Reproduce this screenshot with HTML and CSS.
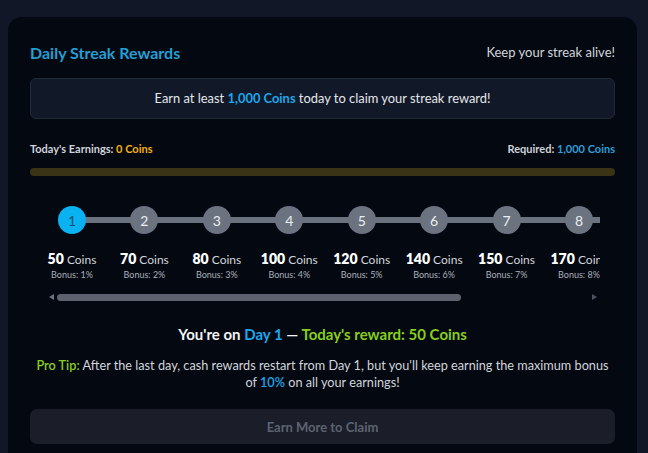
FILE: index.html
```html
<!DOCTYPE html>
<html lang="en">
<head>
<meta charset="utf-8">
<title>Daily Streak Rewards</title>
<link rel="stylesheet" href="styles.css">
</head>
<body>
<div class="card">
  <div class="header">
    <h2 class="title">Daily Streak Rewards</h2>
    <span class="subtitle">Keep your streak alive!</span>
  </div>
  <div class="notice">Earn at least <strong class="blue">1,000 Coins</strong> today to claim your streak reward!</div>
  <div class="earn-row">
    <span>Today's Earnings: <span class="amber">0 Coins</span></span>
    <span>Required: <span class="blue-dim">1,000 Coins</span></span>
  </div>
  <div class="bar"><div class="bar-fill"></div></div>

  <div class="steps-wrap">
    <div class="steps">
      <div class="step active"><div class="dot">1</div><div class="amt"><b>50</b> Coins</div><div class="bonus">Bonus: 1%</div></div>
      <div class="step"><div class="dot">2</div><div class="amt"><b>70</b> Coins</div><div class="bonus">Bonus: 2%</div></div>
      <div class="step"><div class="dot">3</div><div class="amt"><b>80</b> Coins</div><div class="bonus">Bonus: 3%</div></div>
      <div class="step"><div class="dot">4</div><div class="amt"><b>100</b> Coins</div><div class="bonus">Bonus: 4%</div></div>
      <div class="step"><div class="dot">5</div><div class="amt"><b>120</b> Coins</div><div class="bonus">Bonus: 5%</div></div>
      <div class="step"><div class="dot">6</div><div class="amt"><b>140</b> Coins</div><div class="bonus">Bonus: 6%</div></div>
      <div class="step"><div class="dot">7</div><div class="amt"><b>150</b> Coins</div><div class="bonus">Bonus: 7%</div></div>
      <div class="step"><div class="dot">8</div><div class="amt"><b>170</b> Coins</div><div class="bonus">Bonus: 8%</div></div>
      <div class="step"><div class="dot">9</div><div class="amt"><b>190</b> Coins</div><div class="bonus">Bonus: 9%</div></div>
      <div class="step last"><div class="dot">10</div><div class="amt"><b>200</b> Coins</div><div class="bonus">Bonus: 10%</div></div>
    </div>
    <div class="scrollbar">
      <span class="arrow arrow-left"></span>
      <div class="track"><div class="thumb"></div></div>
      <span class="arrow arrow-right"></span>
    </div>
  </div>

  <p class="status">You're on <span class="blue">Day 1</span> — <span class="green">Today's reward: 50 Coins</span></p>
  <p class="tip"><span class="green-tip">Pro Tip:</span> After the last day, cash rewards restart from Day 1, but you'll keep earning the maximum bonus of <span class="blue-tip">10%</span> on all your earnings!</p>

  <button class="claim" type="button" disabled>Earn More to Claim</button>
</div>
</body>
</html>
```
FILE: styles.css
```css
* { box-sizing: border-box; }
html, body { height: 100%; }
body {
  margin: 0;
  padding: 17px 11px 0 8px;
  background: #111726;
  font-family: "Lato", "Open Sans", sans-serif;
  color: #d1d5db;
  overflow: hidden;
}
.card {
  background: #040811;
  border-radius: 14px;
  padding: 22px 22px 30px;
  min-height: 480px;
}
.header {
  display: flex;
  justify-content: space-between;
  align-items: center;
  height: 26px;
}
.title {
  margin: 0;
  font-size: 16px;
  font-weight: 700;
  color: #229fd4;
}
.subtitle {
  font-size: 13px;
  color: #d1d5db;
}
.notice {
  margin-top: 13px;
  background: #111827;
  border: 1px solid #202938;
  border-radius: 6px;
  padding: 11px;
  line-height: 17px;
  font-size: 12.9px;
  text-align: center;
  color: #e5e7eb;
}
.blue { color: #1aa7ec; font-weight: 700; }
.amber { color: #f2b10e; }
.blue-dim { color: #2a9fd6; }
.earn-row {
  margin-top: 22px;
  display: flex;
  justify-content: space-between;
  font-size: 11px;
  font-weight: 700;
  line-height: 16px;
  color: #cfd3da;
}
.bar {
  margin-top: 11px;
  height: 8px;
  border-radius: 4px;
  background: #3a3315;
  overflow: hidden;
}
.bar-fill { width: 0; height: 100%; background: #eab308; }

.steps-wrap {
  margin: 30px 15px 0;
}
.steps {
  display: flex;
  gap: 18.43px;
  overflow: hidden;
}
.step {
  position: relative;
  flex: 0 0 54px;
  width: 54px;
  min-width: 0;
  display: flex;
  flex-direction: column;
  align-items: center;
  white-space: nowrap;
}
.step::after {
  content: "";
  position: absolute;
  left: 27px;
  top: 11px;
  width: 72.43px;
  height: 6px;
  background: #6b7280;
}
.step.last::after { display: none; }
.dot {
  position: relative;
  z-index: 1;
  flex: 0 0 28px;
  width: 28px;
  height: 28px;
  border-radius: 50%;
  background: #6b7280;
  color: #eceef1;
  font-size: 14px;
  display: flex;
  align-items: center;
  justify-content: center;
}
.step.active .dot {
  background: #0bb2f2;
  color: #0f4f78;
}
.amt {
  margin-top: 16px;
  line-height: 18px;
  font-size: 12px;
  color: #d1d5db;
}
.amt b {
  font-size: 14px;
  color: #ffffff;
  font-weight: 800;
}
.bonus {
  font-size: 9px;
  line-height: 11px;
  color: #aab0ba;
}
.scrollbar {
  margin-top: 13px;
  height: 8px;
  display: flex;
  align-items: center;
}
.arrow {
  flex: 0 0 12px;
  height: 8px;
  display: flex;
  align-items: center;
  justify-content: center;
}
.arrow::before {
  content: "";
  border-top: 3.5px solid transparent;
  border-bottom: 3.5px solid transparent;
}
.arrow-left::before { border-right: 5px solid #6b7280; }
.arrow-right::before { border-left: 5px solid #4b5060; }
.track {
  flex: 1;
  height: 7px;
}
.thumb {
  width: 76%;
  height: 100%;
  border-radius: 4px;
  background: #5d616d;
}
.status {
  margin: 24px 0 0;
  text-align: center;
  font-size: 15px;
  font-weight: 700;
  line-height: 18px;
  color: #f3f4f6;
}
.green { color: #86cf1c; }
.tip {
  margin: 14px 0 0;
  text-align: center;
  font-size: 12.7px;
  line-height: 17px;
  color: #d1d5db;
}
.green-tip { color: #86cf1c; font-weight: 600; }
.blue-tip { color: #1aa7ec; font-weight: 600; }
.claim {
  display: block;
  width: 100%;
  margin-top: 18px;
  height: 35px;
  border: none;
  border-radius: 7px;
  background: #1b1e28;
  color: #5d6371;
  font-family: inherit;
  font-size: 13px;
  font-weight: 700;
}
```
